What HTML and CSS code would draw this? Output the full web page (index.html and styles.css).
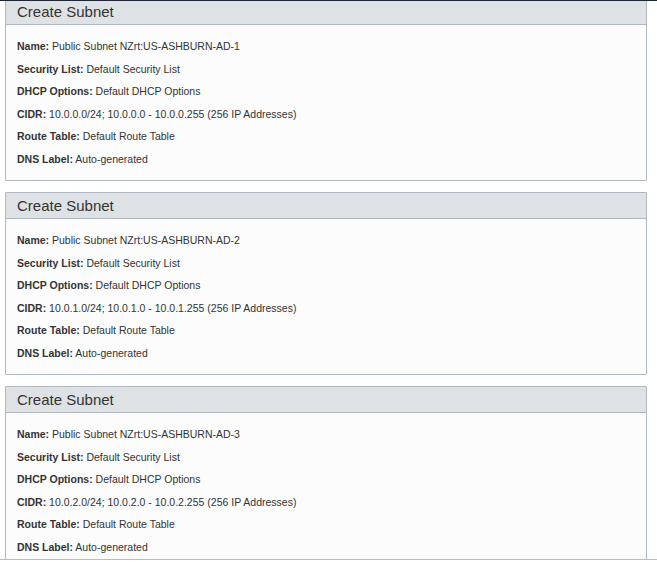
FILE: index.html
```html
<!DOCTYPE html>
<html>
<head>
<meta charset="utf-8">
<link rel="stylesheet" href="styles.css">
</head>
<body>
<div class="topbar"></div>
<div class="viewport">
  <div class="list">
    <section class="card">
      <div class="card-header">Create Subnet</div>
      <div class="card-body">
        <div class="row"><b>Name:</b> Public Subnet NZrt:US-ASHBURN-AD-1</div>
        <div class="row"><b>Security List:</b> Default Security List</div>
        <div class="row"><b>DHCP Options:</b> Default DHCP Options</div>
        <div class="row"><b>CIDR:</b> 10.0.0.0/24; 10.0.0.0 - 10.0.0.255 (256 IP Addresses)</div>
        <div class="row"><b>Route Table:</b> Default Route Table</div>
        <div class="row"><b>DNS Label:</b> Auto-generated</div>
      </div>
    </section>
    <section class="card">
      <div class="card-header">Create Subnet</div>
      <div class="card-body">
        <div class="row"><b>Name:</b> Public Subnet NZrt:US-ASHBURN-AD-2</div>
        <div class="row"><b>Security List:</b> Default Security List</div>
        <div class="row"><b>DHCP Options:</b> Default DHCP Options</div>
        <div class="row"><b>CIDR:</b> 10.0.1.0/24; 10.0.1.0 - 10.0.1.255 (256 IP Addresses)</div>
        <div class="row"><b>Route Table:</b> Default Route Table</div>
        <div class="row"><b>DNS Label:</b> Auto-generated</div>
      </div>
    </section>
    <section class="card">
      <div class="card-header">Create Subnet</div>
      <div class="card-body">
        <div class="row"><b>Name:</b> Public Subnet NZrt:US-ASHBURN-AD-3</div>
        <div class="row"><b>Security List:</b> Default Security List</div>
        <div class="row"><b>DHCP Options:</b> Default DHCP Options</div>
        <div class="row"><b>CIDR:</b> 10.0.2.0/24; 10.0.2.0 - 10.0.2.255 (256 IP Addresses)</div>
        <div class="row"><b>Route Table:</b> Default Route Table</div>
        <div class="row"><b>DNS Label:</b> Auto-generated</div>
      </div>
    </section>
  </div>
</div>
</body>
</html>
```

FILE: styles.css
```css
html, body {
  margin: 0;
  padding: 0;
  background: #ffffff;
  font-family: "Liberation Sans", Arial, sans-serif;
  color: #333333;
}

.topbar {
  height: 1px;
  background: #1d2733;
}

.viewport {
  height: 558px;
  overflow: hidden;
  border-bottom: 1px solid #b6bdc6;
}

.list {
  display: flex;
  flex-direction: column;
  gap: 11px;
  margin-top: -3px;
  padding: 0 10px 0 5px;
}

.card {
  background: #fcfcfc;
  border: 1px solid #b0b8c1;
  border-radius: 1px;
}

.card-header {
  height: 25px;
  line-height: 25px;
  padding: 0 11px;
  background: #dfe2e5;
  border-bottom: 1px solid #b0b8c1;
  font-size: 15px;
  color: #333333;
}

.card-body {
  padding: 10px 11px;
}

.row {
  font-size: 10.5px;
  line-height: 22.5px;
  color: #333333;
}

.row b {
  font-weight: bold;
}
```
